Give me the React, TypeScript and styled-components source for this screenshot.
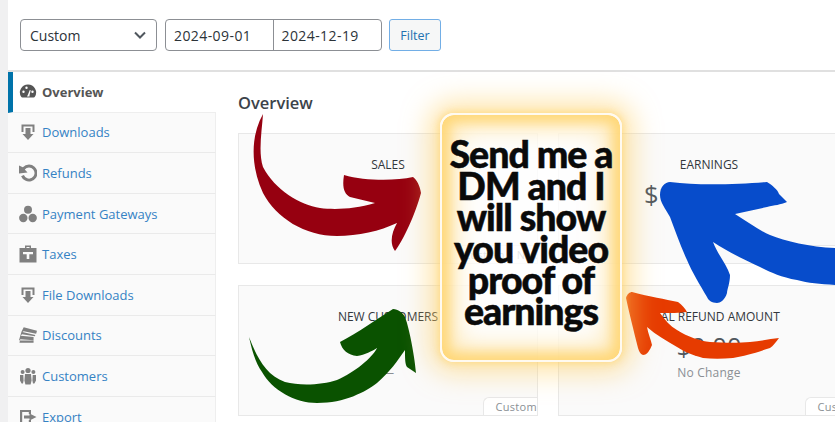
import React from "react";
import styled, { createGlobalStyle } from "styled-components";

const Global = createGlobalStyle`
  html, body { margin: 0; padding: 0; background: #fff; overflow: hidden; }
  #root { width: 835px; height: 422px; overflow: hidden; }
  * { box-sizing: border-box; }
`;
const Page = styled.div`
  position: relative; width: 835px; height: 422px; overflow: hidden; display: flex;
  background: #f0f0f1; font-family: "Open Sans", "Noto Sans", sans-serif;
`;
const Main = styled.div`
  margin-left: 8px; width: 827px; height: 422px; background: #fff;
  display: flex; flex-direction: column;
`;
const Toolbar = styled.div`
  height: 72px; flex: none; padding: 19px 0 0 12px; display: flex; align-items: flex-start; gap: 8px;
  border-bottom: 2px solid #e0e0e0;
`;
const Select = styled.div`
  width: 137px; height: 32px; border: 1px solid #8c8f94; border-radius: 4px; background: #fff;
  display: flex; align-items: center; justify-content: space-between; padding: 0 9px;
  font-size: 14px; color: #2c3338;
`;
const DateGroup = styled.div`
  display: flex; width: 217px; height: 32px; border: 1px solid #8c8f94; border-radius: 4px; background: #fff;
`;
const DateField = styled.div<{ $first?: boolean }>`
  width: 50%; display: flex; align-items: center; padding-left: 8px; font-size: 14px; letter-spacing: .42px; color: #2c3338;
  border-right: ${(p) => (p.$first ? "1px solid #8c8f94" : "0")};
`;
const FilterButton = styled.div`
  margin-left: -1px; width: 52px; height: 32px; border: 1px solid #72aee6; border-radius: 3px; background: #f6f7f7;
  color: #2271b1; font-size: 12.5px; display: flex; align-items: center; justify-content: center;
`;
const Body = styled.div`display: flex; flex: 1; min-height: 0;`;
const Tabs = styled.nav`width: 208px; flex: none; display: flex; flex-direction: column;`;
const Tab = styled.div<{ $active?: boolean }>`
  height: 40.6px; flex: none; display: flex; align-items: center; gap: 5px;
  padding-left: ${(p) => (p.$active ? "6px" : "11px")};
  background: ${(p) => (p.$active ? "#fff" : "#fafafa")};
  border-bottom: 1px solid ${(p) => (p.$active ? "#eee" : "#eaeaea")};
  border-right: ${(p) => (p.$active ? "0" : "1px solid #eee")};
  border-left: ${(p) => (p.$active ? "5px solid #0073aa" : "0")};
  color: ${(p) => (p.$active ? "#555" : "#3582c4")};
  font-size: 13px; font-weight: ${(p) => (p.$active ? 700 : 400)};
`;
const IconBox = styled.svg<{ $dark?: boolean }>`
  width: 18px; height: 18px; flex: none; fill: ${(p) => (p.$dark ? "#555" : "#808080")};
`;
const Content = styled.section`flex: 1; min-width: 0; padding: 20px 0 0 22px;`;
const Heading = styled.h2`
  margin: 0 0 19px; font-size: 16.5px; line-height: 22px; font-weight: 600; color: #3c434a;
  font-family: "Open Sans", sans-serif;
`;
const Grid = styled.div`
  display: grid; grid-template-columns: 300px 302px; grid-auto-rows: 131px; column-gap: 20px; row-gap: 21px;
`;
const Card = styled.article`
  position: relative; background: #fafafa; border: 1px solid #e8e8e8; padding-top: 23px;
  display: flex; flex-direction: column; align-items: center;
`;
const CardTitle = styled.div`font-size: 12px; line-height: 16px; color: #32373c;`;
const Value = styled.div`margin-top: 4px; font-size: 25.5px; line-height: 34px; color: #50575e;`;
const Change = styled.div`margin-top: 2px; font-size: 12px; line-height: 16px; color: #8a8f94; letter-spacing: .2px;`;
const RangeTag = styled.div`
  position: absolute; right: 0; bottom: 0; height: 18px; padding: 0 0 0 12px; background: #fff; border: 1px solid #e8e8e8;
  border-right: 0; border-bottom: 0; border-top-left-radius: 6px; font-size: 11px; line-height: 18px; color: #8a8f94; letter-spacing: .3px;
`;
const Callout = styled.aside`
  position: absolute; left: 440px; top: 113px; width: 182px; height: 249px; padding-bottom: 10px;
  border: 2px solid #fffaf0; border-radius: 14px;
  background: rgba(255, 255, 255, .78);
  box-shadow: 0 0 6px 2px rgba(255, 212, 110, .55), 0 0 26px 12px rgba(255, 208, 95, .5),
    inset 0 0 12px 7px rgba(255, 210, 100, .75), inset 0 0 26px 13px rgba(255, 210, 100, .5);
  display: flex; align-items: center; justify-content: center; text-align: center;
  font-family: Lato, sans-serif; font-weight: 900; font-size: 37.5px; line-height: 31.4px; letter-spacing: -1px; color: #0a0a0a;
  -webkit-text-stroke: .5px #0a0a0a;
`;
const ArrowLayer = styled.svg`position: absolute; left: 0; top: 0; width: 835px; height: 422px; pointer-events: none;`;

const Gauge = () => <IconBox $dark viewBox="0 0 18 18"><path fillRule="evenodd" d="M9 1.500a8 8 0 0 0-7 12c.3.6.8.9 1.400.9h11.200c.6 0 1.100-.3 1.400-.9a8 8 0 0 0-7-12zM4.500 10a1.200 1.200 0 1 1 0-2.400 1.200 1.200 0 0 1 0 2.400zm3-4a1.200 1.200 0 1 1 0-2.400 1.200 1.200 0 0 1 0 2.400zm3 7.500H8l1-2 1.800-4.600.9.300-1.100 4.700zM13.500 10a1.200 1.200 0 1 1 0-2.400 1.200 1.200 0 0 1 0 2.400z" /></IconBox>;
const Download = () => <IconBox viewBox="0 0 18 18"><path d="M2.500 1.500h13v7.500h-2V3.500h-9V9h-2zM6.500 5h5v6h3L9 17l-5.500-6h3z" /></IconBox>;
const Undo = () => <IconBox viewBox="0 0 18 18"><path d="M10 .5a8.500 8.500 0 1 1-7.900 11.700l2.800-1.100a5.500 5.500 0 1 0 .9-5.500L8.500 8.500 0 9.500V1.500l3.800 1.700A8.500 8.500 0 0 1 10 .5z" /></IconBox>;
const Group = () => <IconBox viewBox="0 0 18 18"><circle cx="9" cy="4.800" r="4" /><circle cx="4.300" cy="13" r="4.200" /><circle cx="13.700" cy="13" r="4.200" /></IconBox>;
const Tax = () => <IconBox viewBox="0 0 18 18"><path fillRule="evenodd" d="M6 .5h6V3h5.500v14.500H.5V3H6zM7.500 2v1h3V2zM4 7v2.200h3.700V14h2.600V9.200H14V7z" /></IconBox>;
const Tickets = () => <IconBox viewBox="0 0 21 18"><path d="M5.500 0L21 4l-1 3.500-14.500-3L4 5.500l15 3.500-.5 1.500-15-2.500-1.500 2 15 1.200V15L1.500 14 .5 18h16.500v-2.500L0 15l1.500-5L3 5z" /></IconBox>;
const People = () => <IconBox viewBox="0 0 18 18"><circle cx="9" cy="3.500" r="2.600" /><circle cx="3.600" cy="5" r="2" /><circle cx="14.400" cy="5" r="2" /><path d="M6 7h6l.6 6.500-1 4H6.400l-1-4zM1 8h3.300l.3 5.500-.6 3H2.600L1 13.500zM13.700 8H17v5.500l-1.600 3H14l-.6-3z" /></IconBox>;
const ExportIcon = () => <IconBox viewBox="0 0 18 18"><path d="M1 2h11v4H9.800V4H3.200v10h6.600v-2H12v4H1zM10.500 5.500l7 3.500-7 3.500V10.500H5v-3h5.500z" /></IconBox>;

const items = [
  { label: "Downloads", icon: <Download /> },
  { label: "Refunds", icon: <Undo /> },
  { label: "Payment Gateways", icon: <Group /> },
  { label: "Taxes", icon: <Tax /> },
  { label: "File Downloads", icon: <Download /> },
  { label: "Discounts", icon: <Tickets /> },
  { label: "Customers", icon: <People /> },
  { label: "Export", icon: <ExportIcon /> },
];

const cards = [
  { title: "SALES", value: "16", change: "", range: "Custom – N/A" },
  { title: "EARNINGS", value: "$15,250.00", change: "", range: "Custom" },
  { title: "NEW CUSTOMERS", value: "16", change: "—", range: "Custom" },
  { title: "TOTAL REFUND AMOUNT", value: "$0.00", change: "No Change", range: "Custom" },
];

export default function App() {
  return (
    <Page>
      <Global />
      <Main>
        <Toolbar>
          <Select>
            Custom
            <svg width="14" height="14" viewBox="0 0 14 14" fill="none" stroke="#50575e" strokeWidth="2"><path d="M2 4.500l5 5 5-5" /></svg>
          </Select>
          <DateGroup>
            <DateField $first>2024-09-01</DateField>
            <DateField>2024-12-19</DateField>
          </DateGroup>
          <FilterButton>Filter</FilterButton>
        </Toolbar>
        <Body>
          <Tabs>
            <Tab $active><Gauge />Overview</Tab>
            {items.map((i) => <Tab key={i.label}>{i.icon}{i.label}</Tab>)}
          </Tabs>
          <Content>
            <Heading>Overview</Heading>
            <Grid>
              {cards.map((c) => (
                <Card key={c.title}>
                  <CardTitle>{c.title}</CardTitle>
                  <Value>{c.value}</Value>
                  {c.change && <Change>{c.change}</Change>}
                  <RangeTag>{c.range}</RangeTag>
                </Card>
              ))}
            </Grid>
          </Content>
        </Body>
      </Main>
      <ArrowLayer viewBox="0 0 835 422">
        <path fill="#960010" d="M263 114C251 135 250 165 263 193C276 218 305 236 337 236C358 236 380 231 397 223C392 232 389 243 395 251C403 241 415 215 421 193C420 186 417 180 413 177C395 181 365 181 344 175C342 187 344 194 350 197L375 203C355 209 335 210 320 208C300 205 275 190 263 167C258 152 262 130 263 114Z" />
        <path fill="#0a5200" d="M249 337C252 350 255 362 262 372C272 390 295 403 317 403C345 403 365 392 377 383C390 372 398 360 405 350C405 358 405 364 407 367L416 373C415 360 410 330 405 317C403 313 398 309 393 309C378 318 358 333 340 342C342 350 348 355 357 356C365 355 372 351 377 348C372 358 355 372 337 380C322 385 300 386 285 382C265 375 256 355 249 337Z" />
        <path fill="#074ccb" d="M660 195C660 187 665 182 670 182C700 186 740 184 767 182C772 185 778 190 779 194L787 202C780 205 775 205 767 207L735 214C748 222 760 231 770 235C785 241 810 247 835 248V285C820 284 808 283 797 280C780 277 770 272 760 267C745 260 728 252 713 242C718 255 727 265 730 275C730 283 727 290 727 293C725 300 720 303 717 303C712 303 708 300 707 297C700 285 692 272 687 260C680 245 675 230 670 217C665 208 660 202 660 195Z" />
        <path fill="#e63b00" d="M626 298C627 294 630 292 632 292C650 297 665 299 678 302C682 305 685 308 687 312C680 313 670 313 660 313C665 320 670 326 677 330C688 337 700 341 710 342C725 343 740 343 750 342C760 341 770 339 779 338C776 342 773 346 770 348C755 353 745 356 733 358C722 359 712 359 703 358C692 355 685 352 677 347C667 341 656 335 647 327C648 333 651 340 652 345C650 350 647 355 643 355C640 354 639 351 638 348C634 332 629 312 626 298Z" />
      </ArrowLayer>
      <Callout>Send me a<br />DM and I<br />will show<br />you video<br />proof of<br />earnings</Callout>
    </Page>
  );
}
